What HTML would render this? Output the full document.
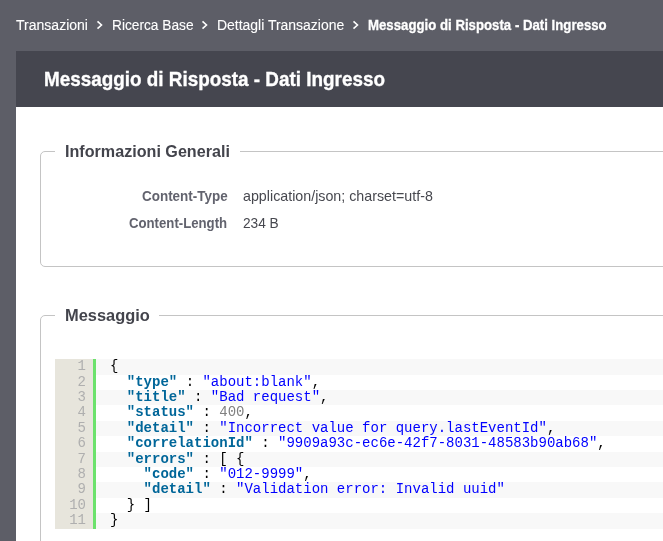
<!DOCTYPE html>
<html><head><meta charset="utf-8">
<style>
*{box-sizing:border-box;margin:0;padding:0}
html,body{width:663px;height:541px;overflow:hidden;background:#5d5e67;font-family:"Liberation Sans",sans-serif}
body{position:relative}
.t{position:absolute;white-space:nowrap;transform-origin:0 0;line-height:1}
.tx{position:absolute;left:0;top:0;width:663px;height:541px;will-change:transform}
.b{font-weight:bold}
.chev{position:absolute;top:19px}
.hdr{position:absolute;left:16px;top:51px;width:660px;height:56px;background:#45464f}
.panel{position:absolute;left:16px;top:107px;width:660px;height:440px;background:#fff}
.fs{position:absolute;border:1px solid #c4c4c4;border-radius:5px}
.gap{position:absolute;background:#fff;height:3px}
.code{position:absolute;font-family:"Liberation Mono",monospace;font-size:14px;will-change:transform}
.gut{position:absolute;left:0;top:0;background:#e7e5dc}
.grn{position:absolute;top:0;background:#6ce26c}
.ln{position:absolute;white-space:pre;color:#000}
.alt{background:#f8f8f8}
.n{position:absolute;left:0;text-align:right;color:#afafaf}
.k{color:#006699;font-weight:bold}
.s{color:#0000ff}
.num{color:#808080}
</style></head><body>
<div class="hdr"></div>
<div class="panel"></div>
<div class="fs" style="left:40px;top:151px;width:640px;height:116px"></div>
<div class="gap" style="left:55px;top:150px;width:185px"></div>
<div class="fs" style="left:40px;top:315px;width:640px;height:300px"></div>
<div class="gap" style="left:55px;top:314px;width:104px"></div>

<svg class="chev" style="left:94.99px" width="10" height="12" viewBox="0 0 10 12"><path d="M2.5 2.3 L6.5 6 L2.5 9.7" fill="none" stroke="#fff" stroke-width="1.6" stroke-linejoin="miter"/></svg>
<svg class="chev" style="left:199.99px" width="10" height="12" viewBox="0 0 10 12"><path d="M2.5 2.3 L6.5 6 L2.5 9.7" fill="none" stroke="#fff" stroke-width="1.6" stroke-linejoin="miter"/></svg>
<svg class="chev" style="left:351.01px" width="10" height="12" viewBox="0 0 10 12"><path d="M2.5 2.3 L6.5 6 L2.5 9.7" fill="none" stroke="#fff" stroke-width="1.6" stroke-linejoin="miter"/></svg>
<div class="tx">
<div class="t" style="left:15.74px;top:17.00px;font-size:15.4px;color:#ffffff;transform:scaleX(0.9113);-webkit-text-stroke:0.1px #fff">Transazioni</div>
<div class="t" style="left:111.86px;top:17.00px;font-size:15.4px;color:#ffffff;transform:scaleX(0.8913);-webkit-text-stroke:0.1px #fff">Ricerca Base</div>
<div class="t" style="left:216.76px;top:17.00px;font-size:15.4px;color:#ffffff;transform:scaleX(0.9068);-webkit-text-stroke:0.1px #fff">Dettagli Transazione</div>
<div class="t b" style="left:367.70px;top:17.00px;font-size:15.4px;color:#ffffff;transform:scaleX(0.8588);-webkit-text-stroke:0.3px #fff">Messaggio di Risposta - Dati Ingresso</div>
<div class="t b" style="left:43.61px;top:68.00px;font-size:21px;color:#ffffff;transform:scaleX(0.8991);-webkit-text-stroke:0.35px #fff">Messaggio di Risposta - Dati Ingresso</div>
<div class="t b" style="left:64.81px;top:144.00px;font-size:16.8px;color:#43444c;transform:scaleX(0.9610)">Informazioni Generali</div>
<div class="t b" style="left:142.30px;top:189.00px;font-size:14.1px;color:#62636e;transform:scaleX(0.9542)">Content-Type</div>
<div class="t b" style="left:129.26px;top:216.00px;font-size:14.1px;color:#62636e;transform:scaleX(0.9352)">Content-Length</div>
<div class="t" style="left:243.04px;top:189.00px;font-size:14.1px;color:#47484f;transform:scaleX(1.0118)">application/json; charset=utf-8</div>
<div class="t" style="left:242.90px;top:216.00px;font-size:14.1px;color:#47484f;transform:scaleX(0.9695)">234 B</div>
<div class="t b" style="left:64.74px;top:308.00px;font-size:16.8px;color:#43444c;transform:scaleX(0.9781)">Messaggio</div>
</div>
<div class="code" style="left:55px;top:359px;width:620px;height:170.00px">
<div class="gut" style="width:38px;height:170.00px"></div><div class="grn" style="left:38px;width:3px;height:170.00px"></div>
<div class="n" style="top:0px;height:16px;line-height:15.4px;width:31px">1</div><div class="ln alt" style="top:0px;height:16px;line-height:15.4px;left:41px;width:600px;padding-left:14px">{</div>
<div class="n" style="top:16px;height:15px;line-height:15.4px;width:31px">2</div><div class="ln" style="top:16px;height:15px;line-height:15.4px;left:41px;width:600px;padding-left:14px">  <span class="k">"type"</span> : <span class="s">"about:blank"</span>,</div>
<div class="n" style="top:31px;height:15px;line-height:15.4px;width:31px">3</div><div class="ln alt" style="top:31px;height:15px;line-height:15.4px;left:41px;width:600px;padding-left:14px">  <span class="k">"title"</span> : <span class="s">"Bad request"</span>,</div>
<div class="n" style="top:46px;height:16px;line-height:15.4px;width:31px">4</div><div class="ln" style="top:46px;height:16px;line-height:15.4px;left:41px;width:600px;padding-left:14px">  <span class="k">"status"</span> : <span class="num">400</span>,</div>
<div class="n" style="top:62px;height:15px;line-height:15.4px;width:31px">5</div><div class="ln alt" style="top:62px;height:15px;line-height:15.4px;left:41px;width:600px;padding-left:14px">  <span class="k">"detail"</span> : <span class="s">"Incorrect value for query.lastEventId"</span>,</div>
<div class="n" style="top:77px;height:16px;line-height:15.4px;width:31px">6</div><div class="ln" style="top:77px;height:16px;line-height:15.4px;left:41px;width:600px;padding-left:14px">  <span class="k">"correlationId"</span> : <span class="s">"9909a93c-ec6e-42f7-8031-48583b90ab68"</span>,</div>
<div class="n" style="top:93px;height:15px;line-height:15.4px;width:31px">7</div><div class="ln alt" style="top:93px;height:15px;line-height:15.4px;left:41px;width:600px;padding-left:14px">  <span class="k">"errors"</span> : [ {</div>
<div class="n" style="top:108px;height:15px;line-height:15.4px;width:31px">8</div><div class="ln" style="top:108px;height:15px;line-height:15.4px;left:41px;width:600px;padding-left:14px">    <span class="k">"code"</span> : <span class="s">"012-9999"</span>,</div>
<div class="n" style="top:123px;height:16px;line-height:15.4px;width:31px">9</div><div class="ln alt" style="top:123px;height:16px;line-height:15.4px;left:41px;width:600px;padding-left:14px">    <span class="k">"detail"</span> : <span class="s">"Validation error: Invalid uuid"</span></div>
<div class="n" style="top:139px;height:15px;line-height:15.4px;width:31px">10</div><div class="ln" style="top:139px;height:15px;line-height:15.4px;left:41px;width:600px;padding-left:14px">  } ]</div>
<div class="n" style="top:154px;height:16px;line-height:15.4px;width:31px">11</div><div class="ln alt" style="top:154px;height:16px;line-height:15.4px;left:41px;width:600px;padding-left:14px">}</div>
</div>
</body></html>
